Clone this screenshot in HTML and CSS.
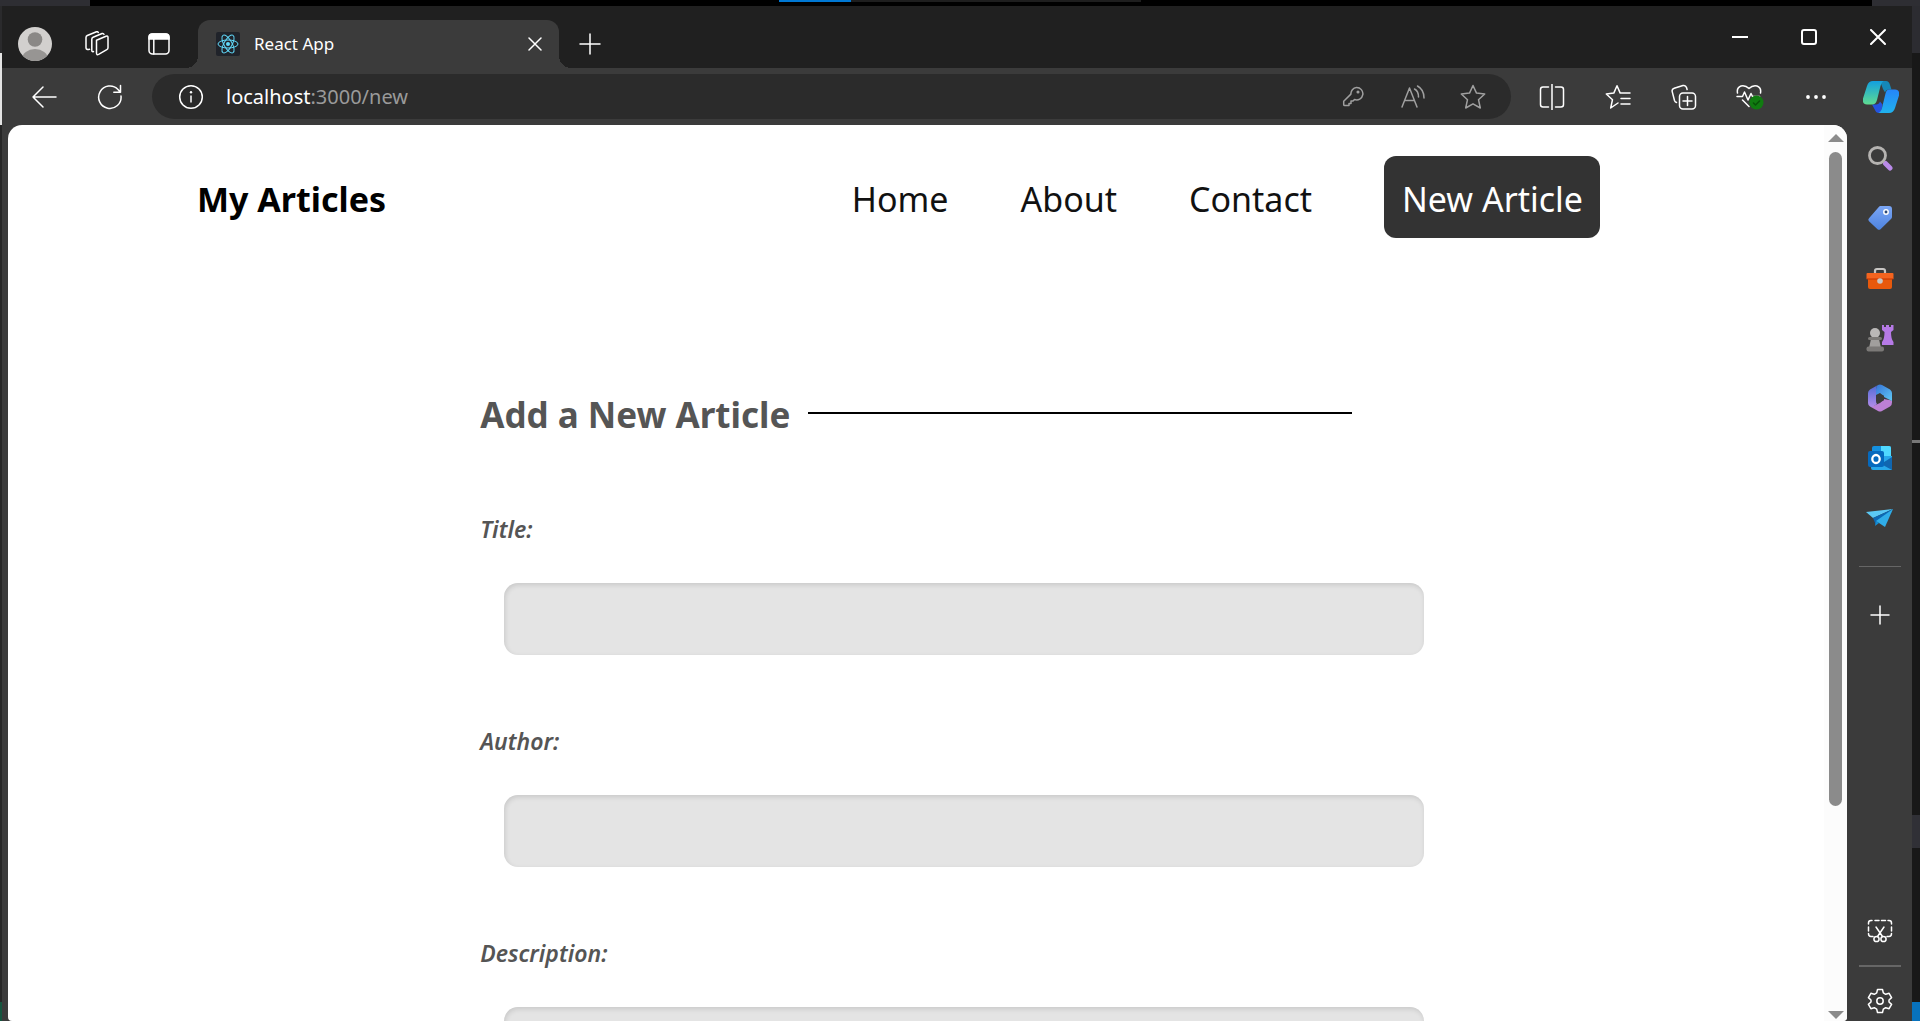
FILE: index.html
```html
<!DOCTYPE html>
<html lang="en">
<head>
<meta charset="utf-8">
<title>React App</title>
<link rel="stylesheet" href="styles.css">
</head>
<body>
<div class="desk-top"><i class="desk-corner-left"></i><i class="desk-space-a"></i><i class="desk-blue"></i><i class="desk-dark"></i><i class="desk-space-b"></i><i class="desk-corner-right"></i></div>
<div class="desk">
<div class="desk-left"></div>
<div class="window">
  <header class="titlebar">
    <button class="tool title-tool" aria-label="Profile"><svg width="34" height="34" viewBox="0 0 34 34"><defs><clipPath id="pc"><circle cx="17" cy="17" r="17"/></clipPath></defs><g clip-path="url(#pc)"><path fill="#d2d0ce" d="M0 0h34v34H0z"/><circle cx="17" cy="12.500" r="7.300" fill="#8a8886"/><ellipse cx="17" cy="32" rx="13" ry="10" fill="#979593"/></g></svg></button>
    <button class="tool title-tool" aria-label="Workspaces"><svg width="26" height="26" viewBox="0 0 26 26" class="line"><path d="M12.500 9.300 22 5.200q2-.7 2 1.300v10.300q0 1.200-1.200 1.800l-8.200 4.700q-2.100 1.100-2.100-1.200z"/><path d="M9.500 20.500q-1.700.6-1.700-1.300V8.300q0-1.500 1.300-2.100l9-3.700q1.500-.4 1.900.9"/><path d="M5.500 18.300q-3.500.8-3.500-1.600V6.600q0-1.500 1.300-2.100l9.200-3.700q1.400-.4 1.800.7"/></svg></button>
    <button class="tool title-tool" aria-label="Tab actions"><svg width="24" height="24" viewBox="0 0 24 24" class="line"><rect x="2" y="2" width="20" height="20" rx="3.500"/><path d="M2 7V5q0-3 3-3h14q3 0 3 3v2z" fill="#fff"/><path d="M6.800 7v15"/></svg></button>
    <div class="tab">
      <svg class="favicon" width="24" height="24" viewBox="0 0 24 24"><rect width="24" height="24" rx="2" fill="#20232a"/><g fill="none" stroke="#61dafb"><ellipse cx="12" cy="12" rx="10" ry="4"/><ellipse cx="12" cy="12" rx="10" ry="4" transform="rotate(60 12 12)"/><ellipse cx="12" cy="12" rx="10" ry="4" transform="rotate(120 12 12)"/></g><circle cx="12" cy="12" r="2" fill="#61dafb"/></svg>
      <span class="tab-name">React App</span>
      <button class="tool tab-close" aria-label="Close tab"><svg width="14" height="14" viewBox="0 0 14 14" class="line"><path d="m1 1 12 12M13 1 1 13"/></svg></button>
    </div>
    <button class="tool title-tool" aria-label="New tab"><svg width="22" height="22" viewBox="0 0 22 22" class="line"><path d="M11 1v20M1 11h20"/></svg></button>
    <div class="controls">
      <button class="tool control" aria-label="Minimize"><svg width="16" height="16" viewBox="0 0 16 16" class="line bold"><path d="M.5 8h15"/></svg></button>
      <button class="tool control" aria-label="Maximize"><svg width="16" height="16" viewBox="0 0 16 16" class="line bold"><rect x="1" y="1" width="14" height="14" rx="2"/></svg></button>
      <button class="tool control" aria-label="Close"><svg width="16" height="16" viewBox="0 0 16 16" class="line bold"><path d="m1 1 14 14M15 1 1 15"/></svg></button>
    </div>
  </header>

  <div class="toolbar">
    <button class="tool bar-tool" aria-label="Back"><svg width="26" height="24" viewBox="0 0 26 24" class="line"><path d="M25 12H2M12 2 2 12l10 10"/></svg></button>
    <button class="tool bar-tool" aria-label="Refresh"><svg width="26" height="26" viewBox="0 0 26 26" class="line"><path d="M24 12a11.200 11.200 0 1 1-3-6.500l2 2.300M23.500 1.500v6.700h-6.700"/></svg></button>
    <div class="address">
      <svg class="info" width="26" height="26" viewBox="0 0 26 26"><circle cx="13" cy="13" r="11.300" fill="none" stroke="#fff" stroke-width="1.500"/><path d="M13 11.500v7" stroke="#fff" stroke-width="1.500"/><circle cx="13" cy="8.300" r="1.200" fill="#fff"/></svg>
      <span class="url"><span class="host">localhost</span>:3000/new</span>
      <button class="tool address-tool" aria-label="Passwords"><svg width="22" height="22" viewBox="0 0 22 22" class="line"><path d="M14.500 1.500a6.200 6.200 0 1 1-2 12l-1.500 1.600H9v2.300H7v2.200H2.800q-1.100 0-1.100-1.100v-3.200l7.200-7.200a6.200 6.200 0 0 1 5.600-6.600z"/><circle cx="16" cy="6" r=".8"/></svg></button>
      <button class="tool address-tool" aria-label="Read aloud"><svg width="26" height="24" viewBox="0 0 26 24" class="line"><path d="m2 22 7.500-19L17 22M4.500 15.500h10M14.500 4q4 2 4 8M17.500 1q6.500 3.500 6.500 12"/></svg></button>
      <button class="tool address-tool" aria-label="Add to favorites"><svg width="26" height="26" viewBox="0 0 26 26" class="line"><path d="m13 1.500 3.500 7.600 8.200.9-6.200 5.700 1.800 8.300-7.300-4.200L5.700 24l1.800-8.300L1.300 10l8.200-.9z"/></svg></button>
    </div>
    <button class="tool bar-tool" aria-label="Split screen"><svg width="26" height="26" viewBox="0 0 26 26" class="line"><path d="M13 0v26M9.500 3H4Q1.500 3 1.500 5.500v15Q1.500 23 4 23h5.500M16.500 3H22q2.500 0 2.500 2.500v15Q24.500 23 22 23h-5.500"/></svg></button>
    <button class="tool bar-tool" aria-label="Favorites"><svg width="26" height="26" viewBox="0 0 26 26" class="line"><path d="M11.500 20 5.700 24l1.800-8.300L1.300 10l7.500-.9 3.200-7.300 3.200 7.300H25M16 14.500h9M16 20h9M11.500 20l1.500-1"/></svg></button>
    <button class="tool bar-tool" aria-label="Collections"><svg width="26" height="26" viewBox="0 0 26 26" class="line"><rect x="8.500" y="9" width="16" height="16" rx="3.500"/><path d="M16.500 12.500v9M12 17h9M5.500 18.500q-1.500-.6-2-2L1.200 7.600q-.6-2.600 2-3.400L12 1.500q2.700-.6 3.500 2l.6 2"/></svg></button>
    <button class="tool bar-tool" aria-label="Browser essentials"><svg width="28" height="26" viewBox="0 0 28 26" class="line"><path d="M1.500 9Q.5 3.500 5 2q4.500-1 8 2.500Q16.500 1 21 2q4.500 1.500 3.500 7M1 12.500h5.500l2-4.500 3.500 8 3-6.500 1.500 3h7M6.500 16l6.500 6.500"/><circle cx="20.500" cy="18.500" r="7" fill="#107c10" stroke="none"/><path d="m17.500 19 2 2 4-4" stroke="#085208"/></svg></button>
    <button class="tool bar-tool" aria-label="Settings and more"><svg width="22" height="6" viewBox="0 0 22 6" fill="#fff"><circle cx="3" cy="3" r="1.900"/><circle cx="11" cy="3" r="1.900"/><circle cx="19" cy="3" r="1.900"/></svg></button>
    <button class="tool copilot" aria-label="Copilot"><svg width="36" height="32" viewBox="0 0 36 32"><defs><linearGradient id="c1" x1="0" y1="0" x2="0" y2="1"><stop stop-color="#129fe0"/><stop offset="1" stop-color="#5fdc91"/></linearGradient><linearGradient id="c2" x1="0" y1="0" x2="0" y2="1"><stop stop-color="#2585fb"/><stop offset="1" stop-color="#20b2ec"/></linearGradient></defs><path fill="#1488b8" d="M17 0h6q3 0 4 4l1.500 4.500H26q-3 0-4 3L20 8z"/><path fill="#2454df" d="M9 23.500h4q3 0 4-3l2.500 3L18 32h-2q-3 0-4-3z"/><path fill="url(#c1)" d="M10 0h10.500q-2 1-3 5l-3.500 14q-1.200 4.500-5 4.500H4q-5 0-4-6L4 5q1.500-5 6-5z"/><path fill="url(#c2)" d="M26 8.500h6q5 0 4 6l-4 12.500q-1.500 5-6 5H15.500q2.500-1 3.500-5l3.500-14.500q1-4 3.500-4z"/></svg></button>
  </div>

  <div class="body">
    <div class="viewport">
      <main class="page">
        <nav class="nav">
          <a class="brand" href="#">My Articles</a>
          <a class="nav-link" href="#">Home</a>
          <a class="nav-link" href="#">About</a>
          <a class="nav-link" href="#">Contact</a>
          <a class="nav-link nav-new" href="#">New Article</a>
        </nav>
        <form class="form">
          <h1 class="heading">Add a New Article</h1>
          <label class="label" for="title">Title:</label>
          <input class="field" id="title" type="text">
          <label class="label" for="author">Author:</label>
          <input class="field" id="author" type="text">
          <label class="label" for="description">Description:</label>
          <input class="field" id="description" type="text">
        </form>
      </main>
      <div class="scroll">
        <svg width="16" height="8" viewBox="0 0 16 8"><path d="m8 0 8 8H0z" fill="#8b8b8b"/></svg>
        <div class="track"><div class="thumb"></div></div>
        <svg width="16" height="8" viewBox="0 0 16 8"><path d="m8 8 8-8H0z" fill="#8b8b8b"/></svg>
      </div>
    </div>
    <aside class="sidebar">
      <button class="tool side-tool" aria-label="Search"><svg width="26" height="26" viewBox="0 0 26 26"><path d="m18.500 18.500 4.500 4.500" stroke="#b98ae8" stroke-width="5" stroke-linecap="round"/><circle cx="10.500" cy="10.500" r="8" fill="none" stroke="#b5b3b1" stroke-width="2.800"/></svg></button>
      <button class="tool side-tool" aria-label="Shopping"><svg width="26" height="26" viewBox="0 0 26 26"><defs><linearGradient id="tg" x1="0" y1="0" x2="0" y2="1"><stop stop-color="#7ba6f5"/><stop offset="1" stop-color="#4d83df"/></linearGradient></defs><path fill="url(#tg)" d="M13 1h9q3 0 3 3v8q0 1-1 2L13.500 24.200q-1.500 1.300-3 0l-8.500-8q-1.500-1.500 0-3L12 1.800z"/><circle cx="19" cy="7" r="2.200" fill="#2b4878" stroke="#fff" stroke-width="1.500"/></svg></button>
      <button class="tool side-tool" aria-label="Tools"><svg width="28" height="22" viewBox="0 0 28 22"><path d="M9 7V4q0-2 2-2h6q2 0 2 2v3" fill="none" stroke="#c8c6c4" stroke-width="2.200"/><path fill="#e8590c" d="M2 9h24v11q0 2-2 2H4q-2 0-2-2z"/><path fill="#f4641f" d="M1.500 6h25q1 0 1 1v5H.5V7q0-1 1-1z"/><path fill="#c43501" d="M.5 11.500h27v1H.5z"/><circle cx="14" cy="14" r="2.800" fill="#c8c6c4"/></svg></button>
      <button class="tool side-tool" aria-label="Games"><svg width="28" height="28" viewBox="0 0 28 28"><path fill="#b67ae6" d="M16 1h2v2h2V1h3v2h2V1h2.500v5L25 8q0 7 2.500 10v3H16v-3q2.500-3 2.500-10L16 6z"/><circle cx="9" cy="9" r="5" fill="#bab8b7"/><path fill="#a19f9d" d="M5 15h8l2 9H3z"/><rect x="2" y="13" width="14" height="3" rx="1.500" fill="#7b7977"/><rect x=".5" y="22.500" width="17.500" height="5" rx="2" fill="#7b7977"/></svg></button>
      <button class="tool side-tool" aria-label="Microsoft 365"><svg width="26" height="28" viewBox="0 0 26 28"><defs><linearGradient id="m1" x1="0" y1="0" x2="1" y2="1"><stop stop-color="#3674d8"/><stop offset="1" stop-color="#60c8f5"/></linearGradient><linearGradient id="m2" x1="0" y1="0" x2="0" y2="1"><stop stop-color="#4f6bd6"/><stop offset="1" stop-color="#b18be8"/></linearGradient></defs><path fill="#bd80d5" d="m3 22.500 8 4.500q2 1 4 0l8-4.500q2-1 2-4v-2L17 15l-4 4-7 3z"/><path fill="url(#m1)" d="M11 1q2-1 4 0l8 4.500Q25 7 25 9v8l-8-4-4-4-4 2V5q0-3 2-4z"/><path fill="url(#m2)" d="M11 1 3 5.500Q1 7 1 9v10q0 2.500 2 3.500 2 1 4-.5l3-2q-1-1-1-3V5q0-3 2-4z"/><path fill="#3b3b3b" d="m13 9.500 4 2.300v4.500l-4 2.300-4-2.300v-4.500z"/></svg></button>
      <button class="tool side-tool" aria-label="Outlook"><svg width="26" height="26" viewBox="0 0 26 26"><path fill="#1490df" d="M5 3q0-2 2-2h15q2 0 2 2v10H5z"/><path fill="#50d9ff" d="M14 1h8q2 0 2 2v8H14z"/><path fill="#28a8ea" d="M5 11h20v14H6q-2 0-2-2z"/><path fill="#1066b0" d="m25 12-11 7 11 6z"/><rect x="1" y="6" width="16" height="16" rx="2" fill="#0669bd"/><ellipse cx="9" cy="14" rx="3.700" ry="4" fill="none" stroke="#fff" stroke-width="2.300"/></svg></button>
      <button class="tool side-tool" aria-label="Drop"><svg width="28" height="20" viewBox="0 0 28 20"><path fill="#5bc9f5" d="M0 4 27 1 7 10z"/><path fill="#0c68b4" d="M7 10 27 1 10 17z"/><path fill="#30ade8" d="M27 1 19 19l-9-6z"/><path fill="#168bd0" d="m10 13-1 5 4-3z"/></svg></button>
      <hr class="divider top-divider">
      <button class="tool side-tool" aria-label="Customize"><svg width="20" height="20" viewBox="0 0 20 20" class="line"><path d="M10 1v18M1 10h18"/></svg></button>
      <div class="side-bottom">
        <button class="tool small-tool" aria-label="Screenshot"><svg width="26" height="24" viewBox="0 0 26 24" class="line"><path d="M1.500 5V4q0-2.500 2.500-2.500h1M8 1.500h4M14.500 1.500h4M21 1.500h1q2.500 0 2.500 2.500v1M1.500 8v4M24.500 8v4M1.500 14.500q0 3 2.500 3h2M24.500 14.500q0 3-2.500 3h-2M9 8l6.500 9.500M17 8l-6.500 9.500"/><circle cx="9.500" cy="20" r="2.600"/><circle cx="16.500" cy="20" r="2.600"/></svg></button>
        <hr class="divider">
        <button class="tool small-tool" aria-label="Settings"><svg width="26" height="26" viewBox="0 0 26 26" class="line"><path d="M10.500 1.500h5l.8 3.400 2.400 1.400 3.400-1 2.500 4.300-2.600 2.400v2l2.600 2.400-2.500 4.300-3.400-1-2.400 1.400-.8 3.400h-5l-.8-3.400-2.400-1.400-3.400 1-2.500-4.300L4 14v-2L1.400 9.600l2.500-4.300 3.400 1 2.400-1.400z"/><circle cx="13" cy="13" r="3.200"/></svg></button>
      </div>
    </aside>
  </div>
</div>
<div class="desk-right"><i class="strip-top"></i><i class="strip-dark"></i><i class="strip-line"></i><i class="strip-mid"></i><i class="strip-panel"></i><i class="strip-low"></i><i class="strip-blue"></i></div>
</div>
</body>
</html>
```
FILE: styles.css
```css
* { box-sizing: border-box; }
body {
  margin: 0;
  height: 100vh;
  display: flex;
  flex-direction: column;
  overflow: hidden;
  background: #1a1a1a;
  font-family: "Noto Sans", "Open Sans", sans-serif;
}

/* what shows of the desktop around the window */
.desk-top { display: flex; height: 6px; background: #000; }
.desk-corner-left { width: 90px; background: #2e2e33; }
.desk-corner-right { width: 48px; background: #2e2e33; }
.desk-space-a { flex: 689; }
.desk-blue { flex: 72; height: 2px; background: #0078d4; }
.desk-dark { flex: 290; height: 2px; background: #1e1e1e; }
.desk-space-b { flex: 731; }
.desk { flex: 1; min-height: 0; display: flex; }
.desk-left {
  width: 2px;
  background: linear-gradient(#2a2a2c 47px, #e4e4e4 47px 119px, #262626 119px 996px, #16553f 996px);
}
.desk-right { width: 8px; display: flex; flex-direction: column; }
.strip-top { flex: 47; background: #2c2c31; }
.strip-dark { flex: 387; background: #181818; }
.strip-line { flex: 3; background: #777; }
.strip-mid { flex: 372; background: #181818; }
.strip-panel { flex: 33; background: #303036; }
.strip-low { flex: 154; background: #181818; }
.strip-blue { flex: 19; background: #0872bd; }

.window { flex: 1; min-width: 0; display: flex; flex-direction: column; background: #3b3b3b; }
.tool {
  display: flex;
  align-items: center;
  justify-content: center;
  flex: none;
  margin: 0;
  padding: 0;
  border: 0;
  background: none;
}
.line { fill: none; stroke: #fff; stroke-width: 1.5; stroke-linecap: round; stroke-linejoin: round; }
.bold { stroke-width: 2; }

.titlebar { display: flex; align-items: flex-end; height: 62px; padding-left: 2px; background: #202020; }
.title-tool { width: 62px; height: 48px; }
.tab {
  display: flex;
  align-items: center;
  position: relative;
  width: 361px;
  height: 48px;
  margin-left: 8px;
  padding: 0 8px 0 18px;
  border-radius: 12px 12px 0 0;
  background: #3b3b3b;
}
/* flared feet of the active tab */
.tab::before, .tab::after { content: ""; position: absolute; bottom: 0; width: 12px; height: 12px; }
.tab::before { right: 100%; background: radial-gradient(circle at 0 0, transparent 12px, #3b3b3b 12px); }
.tab::after { left: 100%; background: radial-gradient(circle at 100% 0, transparent 12px, #3b3b3b 12px); }
.tab-name { flex: 1; margin-left: 14px; color: #fff; font-size: 17px; line-height: 24px; }
.tab-close { width: 32px; height: 32px; }
.controls { display: flex; align-self: stretch; margin-left: auto; }
.control { width: 69px; height: 62px; }

.toolbar { display: flex; align-items: center; height: 57px; padding-left: 9px; }
.bar-tool { width: 66px; height: 45px; }
.copilot { width: 63px; height: 45px; }
.address {
  flex: 1;
  display: flex;
  align-items: center;
  height: 45px;
  margin: 0 8px 0 9px;
  padding: 0 8px 0 26px;
  border-radius: 23px;
  background: #2b2b2b;
}
.url { flex: 1; margin-left: 22px; color: #9a9a9a; font-size: 20px; line-height: 24px; }
.host { color: #fff; }
.address-tool { width: 60px; height: 45px; }
.address-tool .line { stroke: #a0a0a0; }

.body { flex: 1; min-height: 0; display: flex; padding-left: 6px; }
.viewport { flex: 1; min-width: 0; display: flex; overflow: hidden; border-radius: 14px 14px 4px 4px; background: #fff; }
.page { flex: 1; min-width: 0; }
.scroll {
  display: flex;
  flex-direction: column;
  align-items: center;
  width: 23px;
  padding: 9px 0 2px;
  background: #fcfcfc;
}
.track { flex: 1; padding: 10px 0; }
.thumb { width: 13px; height: 77%; border-radius: 7px; background: #8b8b8b; }

.nav {
  display: flex;
  align-items: center;
  gap: 72px;
  padding: 31px 224px 0 189px;
  font-size: 34px;
  line-height: 46px;
}
.nav > a { padding: 20px 0 16px; text-decoration: none; }
.brand { margin-right: auto; color: #000; font-weight: 700; }
.nav-link { color: #111; }
.nav > .nav-new { padding: 20px 17px 16px 18px; border-radius: 12px; background: #333; color: #fff; }

.form { width: 48%; margin: 154px auto 0; color: #555; }
.heading {
  display: flex;
  align-items: center;
  gap: 18px;
  margin: 0 0 73px;
  font-size: 35px;
  font-weight: 700;
  line-height: 46px;
}
.heading::after { content: ""; flex: 1; height: 2px; margin-bottom: 4px; background: #000; }
.label { display: block; font-size: 23px; font-style: italic; font-weight: 600; line-height: 36px; }
.field {
  display: block;
  box-sizing: content-box;
  width: 100%;
  height: 24px;
  margin: 36px 24px 68px;
  padding: 24px;
  border: 0;
  border-radius: 14px;
  background: #e4e4e4;
  box-shadow: inset 1px 2px 5px rgba(0, 0, 0, .12);
  font: inherit;
  font-size: 23px;
}

.sidebar { display: flex; flex-direction: column; align-items: center; width: 65px; padding-top: 3px; }
.side-tool { width: 60px; height: 60px; }
.divider { width: 42px; height: 2px; margin: 0; border: 0; background: #666; }
.top-divider { height: 1px; margin: 18px 0; }
.side-bottom { display: flex; flex-direction: column; align-items: center; gap: 14px; margin-top: auto; }
.small-tool { width: 60px; height: 40px; }
```
